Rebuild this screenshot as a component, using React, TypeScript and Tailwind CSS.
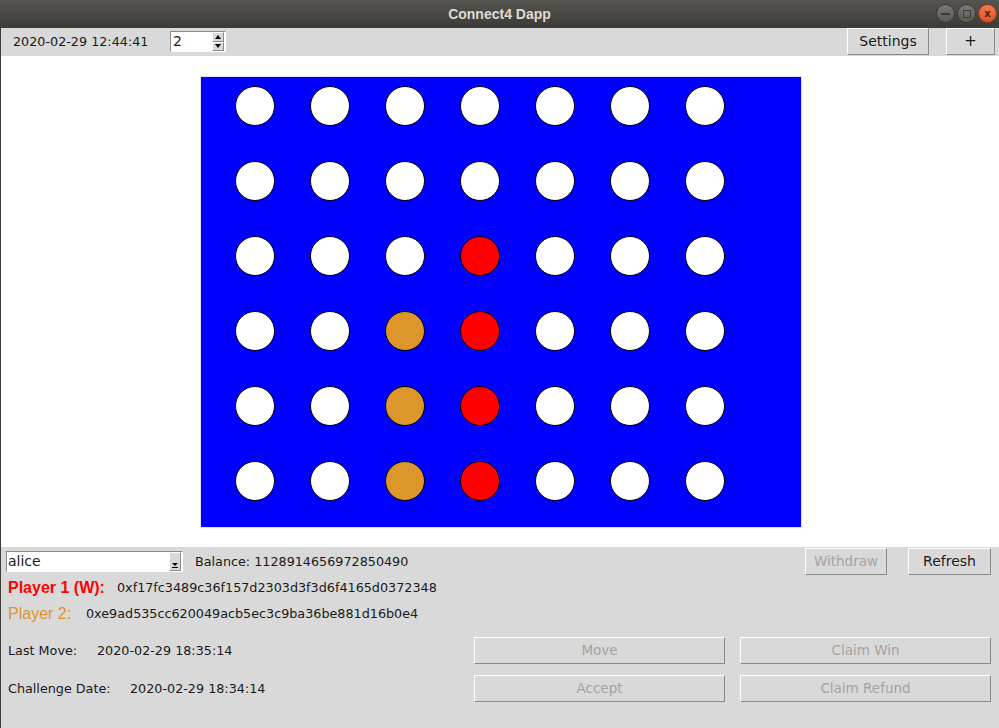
import React from "react"

const ROWS = 6
const COLS = 7

// 0 empty, 1 red, 2 orange
const board: number[][] = [
  [0, 0, 0, 0, 0, 0, 0],
  [0, 0, 0, 0, 0, 0, 0],
  [0, 0, 0, 1, 0, 0, 0],
  [0, 0, 2, 1, 0, 0, 0],
  [0, 0, 2, 1, 0, 0, 0],
  [0, 0, 2, 1, 0, 0, 0],
]

function TkButton({ label, disabled, className }: { label: string; disabled?: boolean; className: string }) {
  return (
    <div
      className={`flex items-center justify-center bg-[#d9d9d9] border border-t-white border-l-white border-b-[#8a8a8a] border-r-[#8a8a8a] ${
        disabled ? "text-[#a3a3a3]" : "text-[#1a1a1a]"
      } ${className}`}
    >
      {label}
    </div>
  )
}

function Circle({ v }: { v: number }) {
  const fill = v === 1 ? "bg-[#ff0000]" : v === 2 ? "bg-[#dd962b]" : "bg-white"
  return <div className={`w-[40px] h-[40px] rounded-full border border-black ${fill}`} />
}

export default function App() {
  return (
    <div
      className="w-[999px] h-[728px] flex flex-col overflow-hidden bg-[#d9d9d9]"
      style={{ fontFamily: '"DejaVu Sans", sans-serif' }}
    >
      {/* title bar */}
      <div className="h-[28px] flex items-center relative bg-gradient-to-b from-[#56544f] to-[#3c3b37]">
        <div
          className="flex-1 text-center text-[14px] font-bold text-[#dfdbd2]"
          style={{ fontFamily: '"Liberation Sans", sans-serif' }}
        >
          Connect4 Dapp
        </div>
        <div className="absolute right-[2px] top-[4px] flex gap-[2px]">
          <div className="w-[19px] h-[19px] rounded-full bg-gradient-to-b from-[#7a7873] to-[#5a5954] border border-[#3a3935] flex items-center justify-center">
            <div className="w-[9px] h-[2px] bg-[#3c3b37]" />
          </div>
          <div className="w-[19px] h-[19px] rounded-full bg-gradient-to-b from-[#7a7873] to-[#5a5954] border border-[#3a3935] flex items-center justify-center">
            <div className="w-[8px] h-[8px] border-[1.5px] border-[#3c3b37]" />
          </div>
          <div className="w-[19px] h-[19px] rounded-full bg-gradient-to-b from-[#f37b4f] to-[#e0501f] border border-[#8a3a1c] flex items-center justify-center text-[10px] leading-none text-[#5a2410] font-bold">
            x
          </div>
        </div>
      </div>

      <div className="flex-1 flex flex-col border-l border-[#3c3b37]">
        {/* toolbar */}
        <div className="h-[28px] flex items-start bg-[#d9d9d9] text-[12.75px] text-[#1a1a1a]">
          <div className="w-[169px] pl-[12px] h-[27px] flex items-center">2020-02-29 12:44:41</div>
          <div className="mt-[3px] w-[56px] h-[21px] bg-white border border-t-[#8a8a8a] border-l-[#8a8a8a] border-b-white border-r-white flex items-center">
            <span className="flex-1 pl-[2px] text-[14px]">2</span>
            <div className="w-[12px] h-[19px] flex flex-col mr-[1px]">
              <div className="flex-1 bg-[#d9d9d9] border border-t-white border-l-white border-b-[#8a8a8a] border-r-[#8a8a8a] flex items-center justify-center">
                <div className="w-0 h-0 border-l-[3px] border-r-[3px] border-b-[4px] border-l-transparent border-r-transparent border-b-black" />
              </div>
              <div className="flex-1 bg-[#d9d9d9] border border-t-white border-l-white border-b-[#8a8a8a] border-r-[#8a8a8a] flex items-center justify-center">
                <div className="w-0 h-0 border-l-[3px] border-r-[3px] border-t-[4px] border-l-transparent border-r-transparent border-t-black" />
              </div>
            </div>
          </div>
          <div className="flex-1" />
          <TkButton label="Settings" className="w-[82px] h-[27px] text-[14px]" />
          <div className="w-[17px]" />
          <TkButton label="+" className="w-[49px] h-[27px] text-[15px]" />
          <div className="w-[4px]" />
        </div>

        {/* canvas */}
        <div className="h-[491px] bg-white pt-[20px] pl-[199px]">
          <div className="w-[602px] h-[452px] border border-[#e2e2e2]">
            <div className="w-[600px] h-[450px] bg-[#0000ff] pl-[34px] pt-[9px] flex flex-col gap-[35px]">
              {board.slice(0, ROWS).map((row, r) => (
                <div key={r} className="flex gap-[35px]">
                  {row.slice(0, COLS).map((v, c) => (
                    <Circle key={c} v={v} />
                  ))}
                </div>
              ))}
            </div>
          </div>
        </div>

        {/* bottom panel */}
        <div className="flex-1 bg-[#d9d9d9] text-[12.75px] text-[#1a1a1a]">
          <div className="h-[29px] pt-[1px] flex items-start">
            <div className="ml-[5px] mt-[3px] w-[177px] h-[21px] bg-white border border-t-[#8a8a8a] border-l-[#8a8a8a] border-b-white border-r-white flex items-center">
              <span className="flex-1 pl-[1px] text-[14px]">alice</span>
              <div className="w-[12px] h-[19px] mr-[1px] bg-[#d9d9d9] border border-t-white border-l-white border-b-[#8a8a8a] border-r-[#8a8a8a] flex flex-col items-center justify-end pb-[2px] gap-[1px]">
                <div className="w-0 h-0 border-l-[3px] border-r-[3px] border-t-[3px] border-l-transparent border-r-transparent border-t-black" />
                <div className="w-[6px] h-[1px] bg-black" />
              </div>
            </div>
            <div className="ml-[12px] h-[27px] flex items-center">Balance: 1128914656972850490</div>
            <div className="flex-1" />
            <TkButton label="Withdraw" disabled className="w-[82px] h-[27px] text-[13.5px]" />
            <div className="w-[21px]" />
            <TkButton label="Refresh" className="w-[83px] h-[27px] text-[14px]" />
            <div className="w-[8px]" />
          </div>
          <div className="h-[24px] flex items-center">
            <span
              className="ml-[7px] w-[109px] text-[16px] font-bold text-[#ff0000]"
              style={{ fontFamily: '"Liberation Sans", sans-serif' }}
            >
              Player 1 (W):
            </span>
            <span>0xf17fc3489c36f157d2303d3f3d6f4165d0372348</span>
          </div>
          <div className="h-[28px] flex items-center">
            <span
              className="ml-[7px] w-[78px] text-[16px] text-[#dd962b]"
              style={{ fontFamily: '"Liberation Sans", sans-serif' }}
            >
              Player 2:
            </span>
            <span>0xe9ad535cc620049acb5ec3c9ba36be881d16b0e4</span>
          </div>
          <div className="mt-[9px] h-[27px] flex items-center">
            <span className="ml-[7px] w-[89px]">Last Move:</span>
            <span className="w-[377px]">2020-02-29 18:35:14</span>
            <TkButton label="Move" disabled className="w-[251px] h-[27px] text-[13.5px]" />
            <div className="w-[15px]" />
            <TkButton label="Claim Win" disabled className="w-[251px] h-[27px] text-[13.5px]" />
          </div>
          <div className="mt-[11px] h-[27px] flex items-center">
            <span className="ml-[7px] w-[122px]">Challenge Date:</span>
            <span className="w-[344px]">2020-02-29 18:34:14</span>
            <TkButton label="Accept" disabled className="w-[251px] h-[27px] text-[13.5px]" />
            <div className="w-[15px]" />
            <TkButton label="Claim Refund" disabled className="w-[251px] h-[27px] text-[13.5px]" />
          </div>
        </div>
      </div>
    </div>
  )
}
